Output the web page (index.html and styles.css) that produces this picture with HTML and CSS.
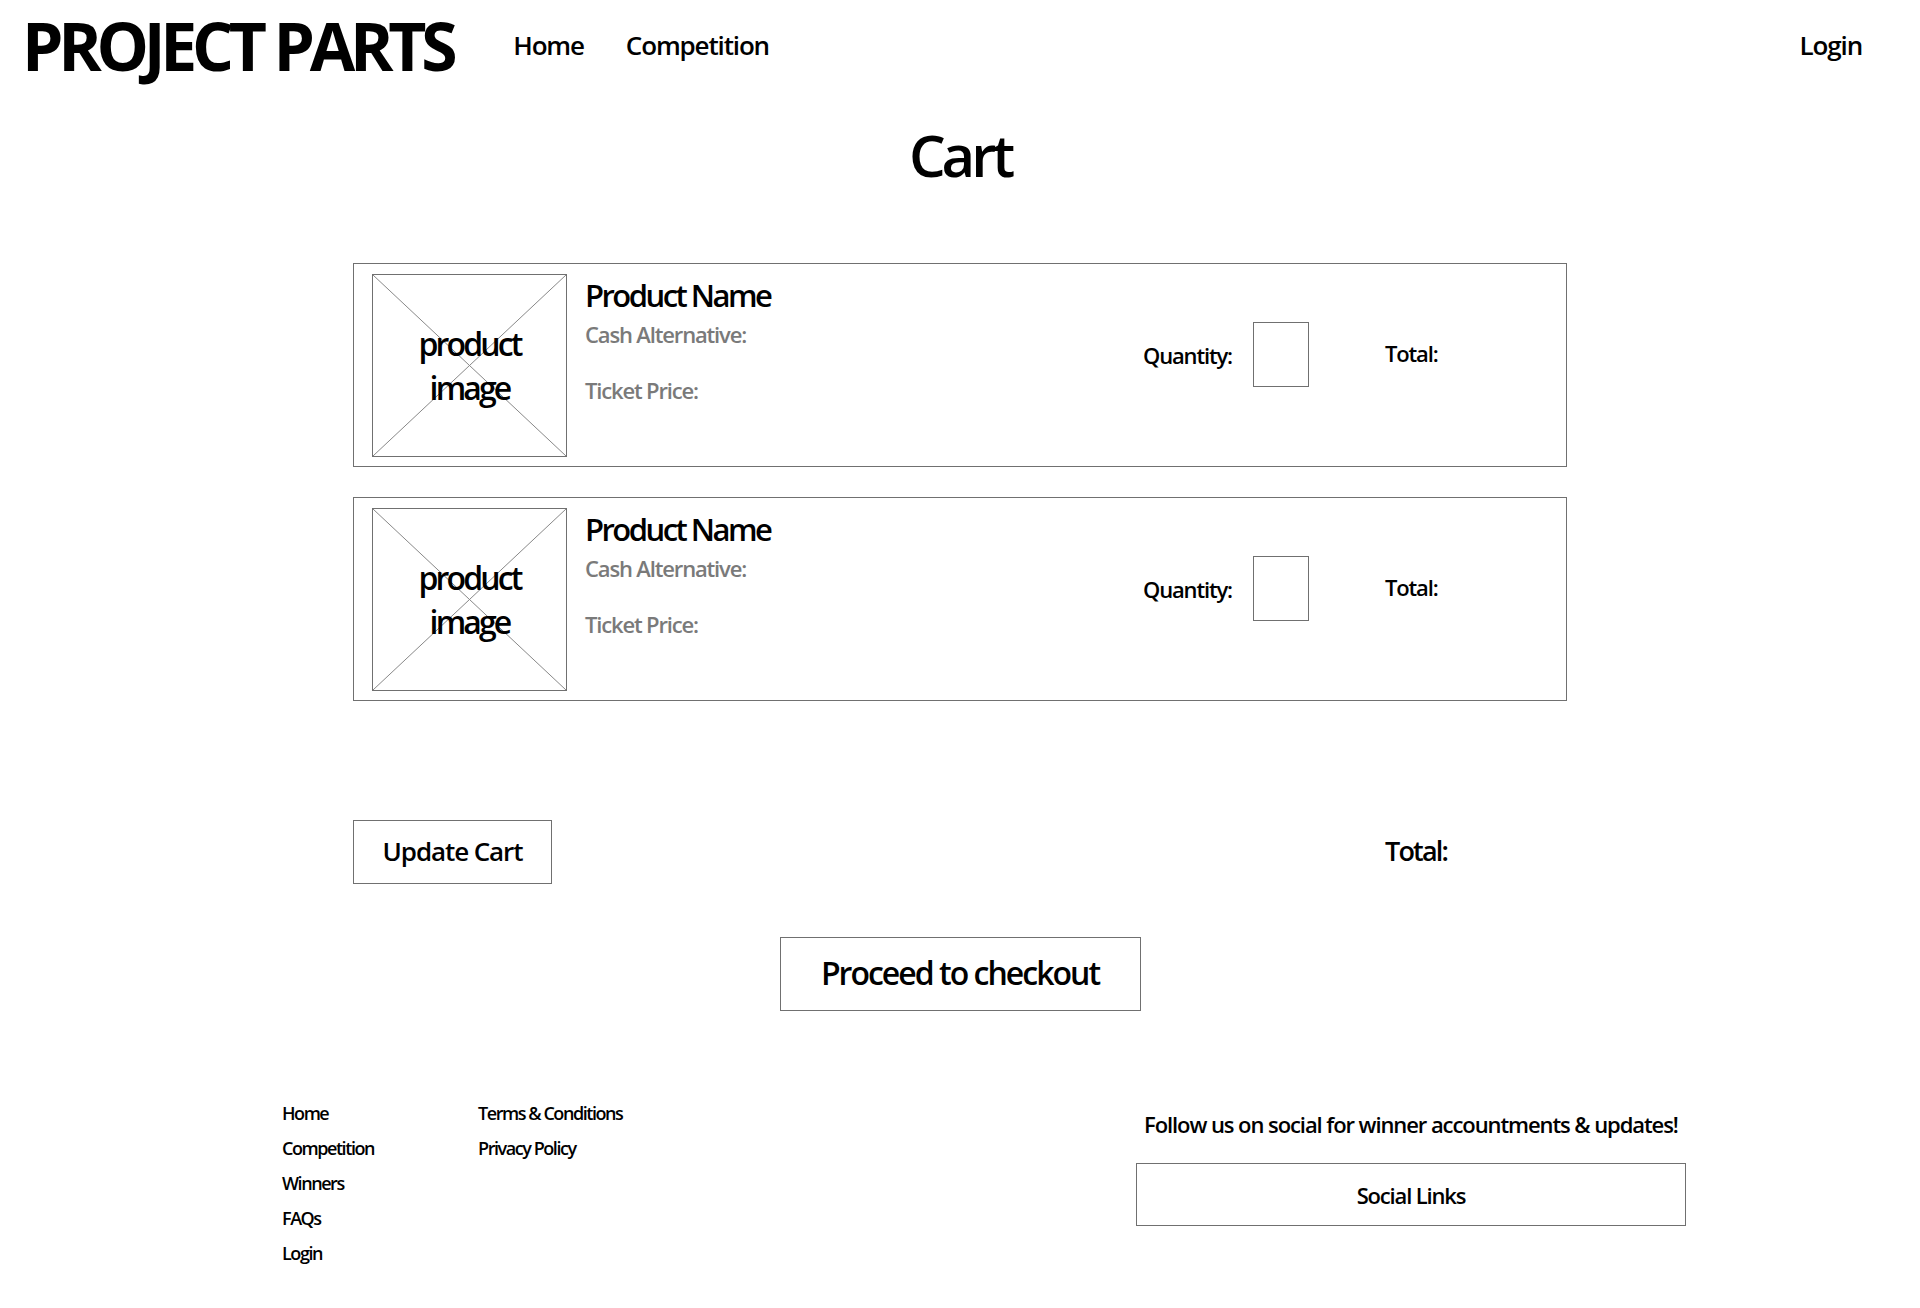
FILE: index.html
```html
<!DOCTYPE html>
<html lang="en">
<head>
<meta charset="utf-8">
<title>Cart - Project Parts</title>
<link rel="stylesheet" href="styles.css">
</head>
<body>
<header class="site-header">
  <div class="logo">PROJECT PARTS</div>
  <nav class="main-nav">
    <a href="#">Home</a>
    <a href="#">Competition</a>
  </nav>
  <a class="login" href="#">Login</a>
</header>

<main class="cart">
  <h1 class="cart-title">Cart</h1>

  <div class="cart-item">
    <div class="thumb">
      <svg class="thumb-x" viewBox="0 0 100 100" preserveAspectRatio="none"><line x1="0" y1="0" x2="100" y2="100"/><line x1="100" y1="0" x2="0" y2="100"/></svg>
      <span class="thumb-text">product<br>image</span>
    </div>
    <div class="info">
      <div class="prod-name">Product Name</div>
      <div class="meta cash">Cash Alternative:</div>
      <div class="meta ticket">Ticket Price:</div>
    </div>
    <div class="qty">
      <span class="qty-label">Quantity:</span>
      <span class="qty-box"></span>
    </div>
    <div class="line-total">Total:</div>
  </div>

  <div class="cart-item">
    <div class="thumb">
      <svg class="thumb-x" viewBox="0 0 100 100" preserveAspectRatio="none"><line x1="0" y1="0" x2="100" y2="100"/><line x1="100" y1="0" x2="0" y2="100"/></svg>
      <span class="thumb-text">product<br>image</span>
    </div>
    <div class="info">
      <div class="prod-name">Product Name</div>
      <div class="meta cash">Cash Alternative:</div>
      <div class="meta ticket">Ticket Price:</div>
    </div>
    <div class="qty">
      <span class="qty-label">Quantity:</span>
      <span class="qty-box"></span>
    </div>
    <div class="line-total">Total:</div>
  </div>

  <div class="cart-actions">
    <button class="btn update">Update Cart</button>
    <div class="grand-total">Total:</div>
  </div>

  <div class="checkout-row">
    <button class="btn checkout">Proceed to checkout</button>
  </div>
</main>

<footer class="site-footer">
  <ul class="foot-col col-1">
    <li>Home</li>
    <li>Competition</li>
    <li>Winners</li>
    <li>FAQs</li>
    <li>Login</li>
  </ul>
  <ul class="foot-col col-2">
    <li>Terms &amp; Conditions</li>
    <li>Privacy Policy</li>
  </ul>
  <div class="social">
    <p class="follow">Follow us on social for winner accountments &amp; updates!</p>
    <div class="social-box">Social Links</div>
  </div>
</footer>
</body>
</html>
```

FILE: styles.css
```css
* { box-sizing: border-box; }
body {
  margin: 0;
  font-family: "Open Sans", "DejaVu Sans", sans-serif;
  font-weight: 600;
  color: #000;
  background: #fff;
  letter-spacing: -0.072em;
}
a { color: inherit; text-decoration: none; }

.site-header {
  display: flex;
  align-items: center;
  height: 90px;
  padding: 0 58px 0 22px;
}
.logo {
  font-size: 66px;
  font-weight: 700;
  letter-spacing: -0.08em;
  line-height: 1;
}
.main-nav {
  display: flex;
  gap: 42px;
  margin-left: 61px;
}
.main-nav a, .login {
  font-size: 26px;
}
.login { margin-left: auto; }

.cart {
  width: 1214px;
  margin: 0 auto;
}
.cart-title {
  margin: 25px 0 0;
  text-align: center;
  font-size: 58px;
  font-weight: 600;
  letter-spacing: -0.07em;
  line-height: 80px;
}
.cart-item {
  display: flex;
  align-items: flex-start;
  height: 204px;
  margin-top: 30px;
  padding: 10px 18px;
  border: 1px solid #707070;
}
.cart-title + .cart-item { margin-top: 68px; }
.thumb {
  position: relative;
  flex: none;
  width: 195px;
  height: 183px;
  border: 1px solid #707070;
  display: flex;
  align-items: center;
  justify-content: center;
}
.thumb-x {
  position: absolute;
  inset: 0;
  width: 100%;
  height: 100%;
}
.thumb-x line { stroke: #888; stroke-width: 1; vector-effect: non-scaling-stroke; }
.thumb-text {
  position: relative;
  text-align: center;
  font-size: 32px;
  letter-spacing: -0.09em;
  line-height: 44px;
}
.info {
  flex: none;
  width: 576px;
  padding-left: 18px;
}
.prod-name {
  font-size: 31px;
  letter-spacing: -0.082em;
  line-height: 40px;
  margin-top: 1px;
}
.meta {
  color: #7a7a7a;
  font-size: 22px;
  line-height: 30px;
}
.cash { margin-top: 4px; }
.ticket { margin-top: 26px; }
.qty {
  display: flex;
  align-items: center;
  gap: 21px;
  margin-top: 48px;
}
.qty-label, .line-total { font-size: 22px; }
.qty-box {
  width: 56px;
  height: 65px;
  border: 1px solid #707070;
}
.line-total {
  margin-top: 47px;
  line-height: 65px;
  margin-left: 76px;
}

.cart-actions {
  display: flex;
  align-items: center;
  margin-top: 119px;
}
.btn {
  font-family: inherit;
  font-weight: inherit;
  color: #000;
  background: #fff;
  border: 1px solid #707070;
  padding: 0 0 3px;
  cursor: pointer;
}
.update {
  width: 199px;
  height: 64px;
  font-size: 26px;
  letter-spacing: -0.042em;
}
.grand-total {
  margin-left: 833px;
  font-size: 27px;
  letter-spacing: -0.067em;
  padding-bottom: 3px;
}
.checkout-row {
  display: flex;
  justify-content: center;
  margin-top: 53px;
}
.checkout {
  width: 361px;
  height: 74px;
  font-size: 32px;
  letter-spacing: -0.062em;
}

.site-footer {
  display: flex;
  align-items: flex-start;
  margin-top: 85px;
  padding: 0 234px 40px 282px;
}
.foot-col {
  list-style: none;
  margin: 0;
  padding: 0;
  font-size: 18px;
  letter-spacing: -0.08em;
  line-height: 35px;
}
.col-1 { width: 196px; }
.social {
  margin-left: auto;
  width: 550px;
}
.follow {
  margin: 0 0 0 8px;
  font-size: 22px;
  letter-spacing: -0.049em;
  line-height: 30px;
  padding-top: 13px;
}
.social-box {
  margin-top: 24px;
  height: 63px;
  border: 1px solid #707070;
  display: flex;
  align-items: center;
  justify-content: center;
  font-size: 22px;
}
```
